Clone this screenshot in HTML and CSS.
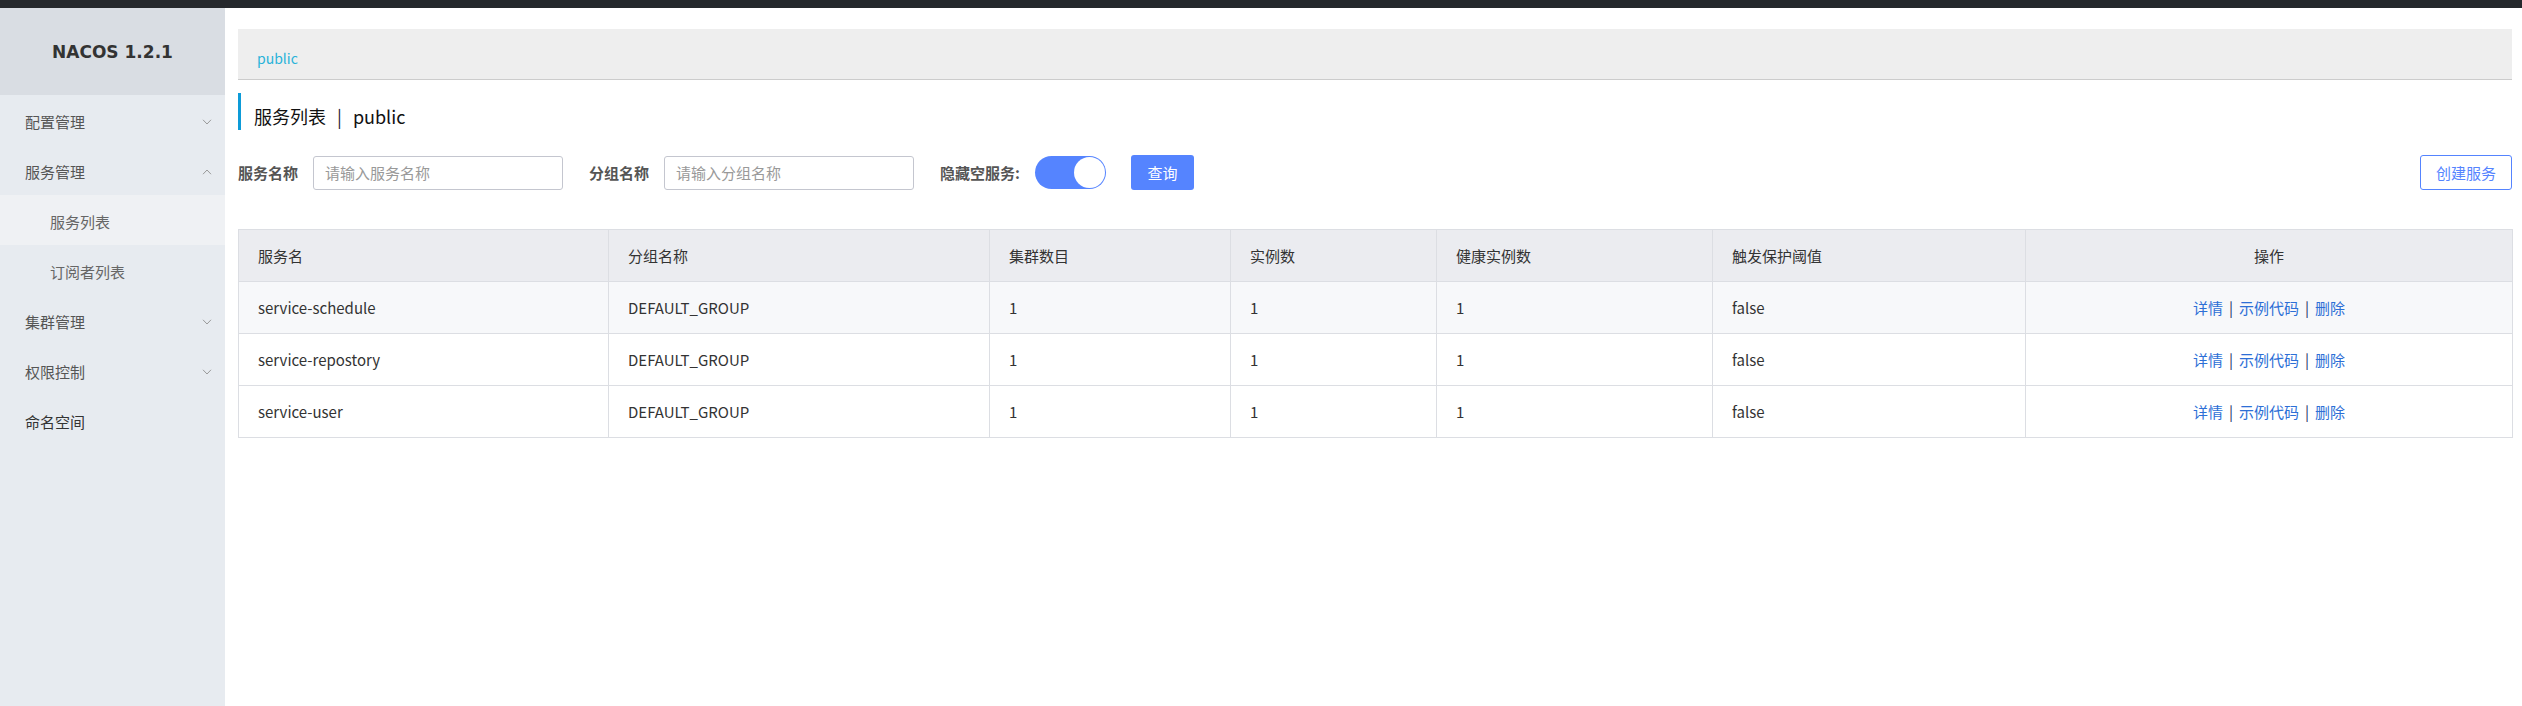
FILE: index.html
```html
<!DOCTYPE html>
<html lang="zh-CN">
<head>
<meta charset="utf-8">
<title>Nacos</title>
<link rel="stylesheet" href="styles.css">
</head>
<body>
<div class="topbar"></div>
<div class="layout">
  <aside class="sidebar">
    <div class="brand">NACOS 1.2.1</div>
    <ul class="menu">
      <li class="menu-item"><span>配置管理</span><svg class="chev" viewBox="0 0 10 6" width="10" height="6"><polyline points="1,0.8 5,5 9,0.8"/></svg></li>
      <li class="menu-item"><span>服务管理</span><svg class="chev" viewBox="0 0 10 6" width="10" height="6"><polyline points="1,5.2 5,1 9,5.2"/></svg></li>
      <li class="sub-item active">服务列表</li>
      <li class="sub-item">订阅者列表</li>
      <li class="menu-item"><span>集群管理</span><svg class="chev" viewBox="0 0 10 6" width="10" height="6"><polyline points="1,0.8 5,5 9,0.8"/></svg></li>
      <li class="menu-item"><span>权限控制</span><svg class="chev" viewBox="0 0 10 6" width="10" height="6"><polyline points="1,0.8 5,5 9,0.8"/></svg></li>
      <li class="menu-item plain"><span>命名空间</span></li>
    </ul>
  </aside>
  <main class="main">
    <div class="breadcrumb"><span class="ns">public</span></div>
    <h1 class="page-title">服务列表<span class="sep">|</span>public</h1>
    <div class="filters">
      <label class="f-label">服务名称</label>
      <input class="f-input" type="text" placeholder="请输入服务名称">
      <label class="f-label">分组名称</label>
      <input class="f-input" type="text" placeholder="请输入分组名称">
      <label class="f-label">隐藏空服务:</label>
      <span class="switch"><span class="knob"></span></span>
      <button class="btn-primary">查询</button>
      <button class="btn-outline">创建服务</button>
    </div>
    <table class="grid">
      <colgroup>
        <col class="c1"><col class="c2"><col class="c3"><col class="c4"><col class="c5"><col class="c6"><col class="c7">
      </colgroup>
      <thead>
        <tr><th>服务名</th><th>分组名称</th><th>集群数目</th><th>实例数</th><th>健康实例数</th><th>触发保护阈值</th><th class="center">操作</th></tr>
      </thead>
      <tbody>
        <tr class="odd"><td>service-schedule</td><td>DEFAULT_GROUP</td><td>1</td><td>1</td><td>1</td><td>false</td><td class="center"><a>详情</a><span class="bar">|</span><a>示例代码</a><span class="bar">|</span><a>删除</a></td></tr>
        <tr><td>service-repostory</td><td>DEFAULT_GROUP</td><td>1</td><td>1</td><td>1</td><td>false</td><td class="center"><a>详情</a><span class="bar">|</span><a>示例代码</a><span class="bar">|</span><a>删除</a></td></tr>
        <tr><td>service-user</td><td>DEFAULT_GROUP</td><td>1</td><td>1</td><td>1</td><td>false</td><td class="center"><a>详情</a><span class="bar">|</span><a>示例代码</a><span class="bar">|</span><a>删除</a></td></tr>
      </tbody>
    </table>
  </main>
</div>
</body>
</html>
```

FILE: styles.css
```css
* { box-sizing: border-box; }
html, body { margin: 0; padding: 0; background: #fff; }
body {
  font-family: "Noto Sans CJK SC", "Noto Sans", sans-serif;
  font-size: 15px;
  color: #333;
}
.topbar { height: 8px; background: #25282c; }
.layout { display: flex; min-height: 698px; }

.sidebar { width: 225px; flex: none; background: #e7ebf0; }
.brand {
  height: 87px;
  background: #d9dde3;
  display: flex; align-items: center; justify-content: center;
  font-family: "DejaVu Sans", "Noto Sans", sans-serif;
  font-weight: bold; font-size: 17px; color: #333;
}
.menu { list-style: none; margin: 0; padding: 0; }
.menu-item, .sub-item {
  height: 50px; display: flex; align-items: center;
  padding-top: 3px;
  font-size: 15px; color: #555;
}
.menu-item { padding-left: 25px; padding-right: 13px; justify-content: space-between; }
.menu-item.plain { color: #333; }
.sub-item { padding-left: 50px; color: #666; }
.sub-item.active { background: #eff1f4; }
.chev { fill: none; stroke: #999; stroke-width: 1; }

.main { flex: 1; padding: 21px 10px 0 13px; min-width: 0; }
.breadcrumb {
  height: 51px; background: #eee; border-bottom: 1px solid #ccc;
  display: flex; align-items: center; padding: 8px 19px 0;
}
.ns { color: #29b3d9; font-size: 14px; }
.page-title {
  margin: 13px 0 0; height: 37px;
  border-left: 3px solid #0d9bd8;
  padding: 10px 0 0 13px;
  font-size: 18px; font-weight: normal; color: #111; line-height: 26px;
}
.sep { margin: 0 11px; color: #223; }

.filters { margin-top: 25px; height: 35px; display: flex; align-items: center; }
.f-label { font-weight: bold; font-size: 15px; color: #555; margin-right: 15px; }
.f-input {
  width: 250px; height: 34px; margin-right: 26px;
  border: 1px solid #c4c6cf; border-radius: 3px;
  padding: 0 11px; font: inherit; font-size: 15px; color: #333;
  outline: none; background: #fff;
}
.f-input::placeholder { color: #999; }
.switch {
  width: 71px; height: 33px; border-radius: 17px; background: #5584ff;
  position: relative; margin-right: 25px; flex: none;
}
.knob {
  position: absolute; right: 1px; top: 1px; width: 31px; height: 31px;
  border-radius: 50%; background: #fff;
}
.btn-primary {
  width: 63px; height: 35px; border: none; border-radius: 3px;
  background: #5584ff; color: #fff; font: inherit; font-size: 15px;
}
.btn-outline {
  margin-left: auto; width: 92px; height: 35px;
  border: 1px solid #5584ff; border-radius: 3px; background: #fff;
  color: #5584ff; font: inherit; font-size: 15px;
}

.grid {
  margin-top: 39px; width: 100%; border-collapse: collapse; table-layout: fixed;
  border: 1px solid #dcdee3;
}
.c1 { width: 370px; } .c2 { width: 381px; } .c3 { width: 241px; }
.c4 { width: 206px; } .c5 { width: 276px; } .c6 { width: 313px; } .c7 { width: 487px; }
.grid th, .grid td {
  height: 52px; border: 1px solid #dcdee3;
  padding: 0 0 0 19px; text-align: left; font-weight: normal; font-size: 15px; color: #333;
}
.grid thead th { background: #ebecf0; }
.grid tr.odd td { background: #f7f8fa; }
.grid .center { text-align: center; padding-left: 0; }
.grid a { color: #2d6fd6; }
.bar { color: #1b2d66; margin: 0 6px; }
```
